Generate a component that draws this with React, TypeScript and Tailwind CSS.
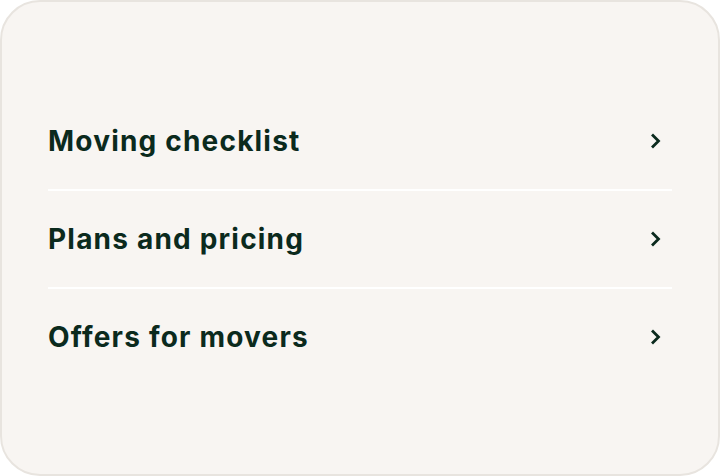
const items = ['Moving checklist', 'Plans and pricing', 'Offers for movers'];

function Chevron() {
  return (
    <svg width="12" height="18" viewBox="0 0 12 18" fill="none" className="shrink-0">
      <path d="M3 3.5 L8.5 9 L3 14.5" stroke="#0b2a1d" strokeWidth="2.8" strokeLinecap="square" strokeLinejoin="miter" />
    </svg>
  );
}

export default function App() {
  return (
    <div className="h-[476px] w-[720px] bg-white">
      <div className="flex h-full w-full flex-col justify-center rounded-[40px] border-2 border-[#e8e4df] bg-[#f8f5f2] px-[46px] pt-[2px]">
        {items.map((label, index) => (
          <div key={label} className={index > 0 ? 'border-t-2 border-white' : ''}>
            <div className="flex h-[96px] items-center justify-between pr-[10px]">
              <span
                className="text-[28px] font-bold tracking-[1.2px] text-[#0b2a1d]"
                style={{ fontFamily: 'Inter, "Liberation Sans", sans-serif' }}
              >
                {label}
              </span>
              <Chevron />
            </div>
          </div>
        ))}
      </div>
    </div>
  );
}
